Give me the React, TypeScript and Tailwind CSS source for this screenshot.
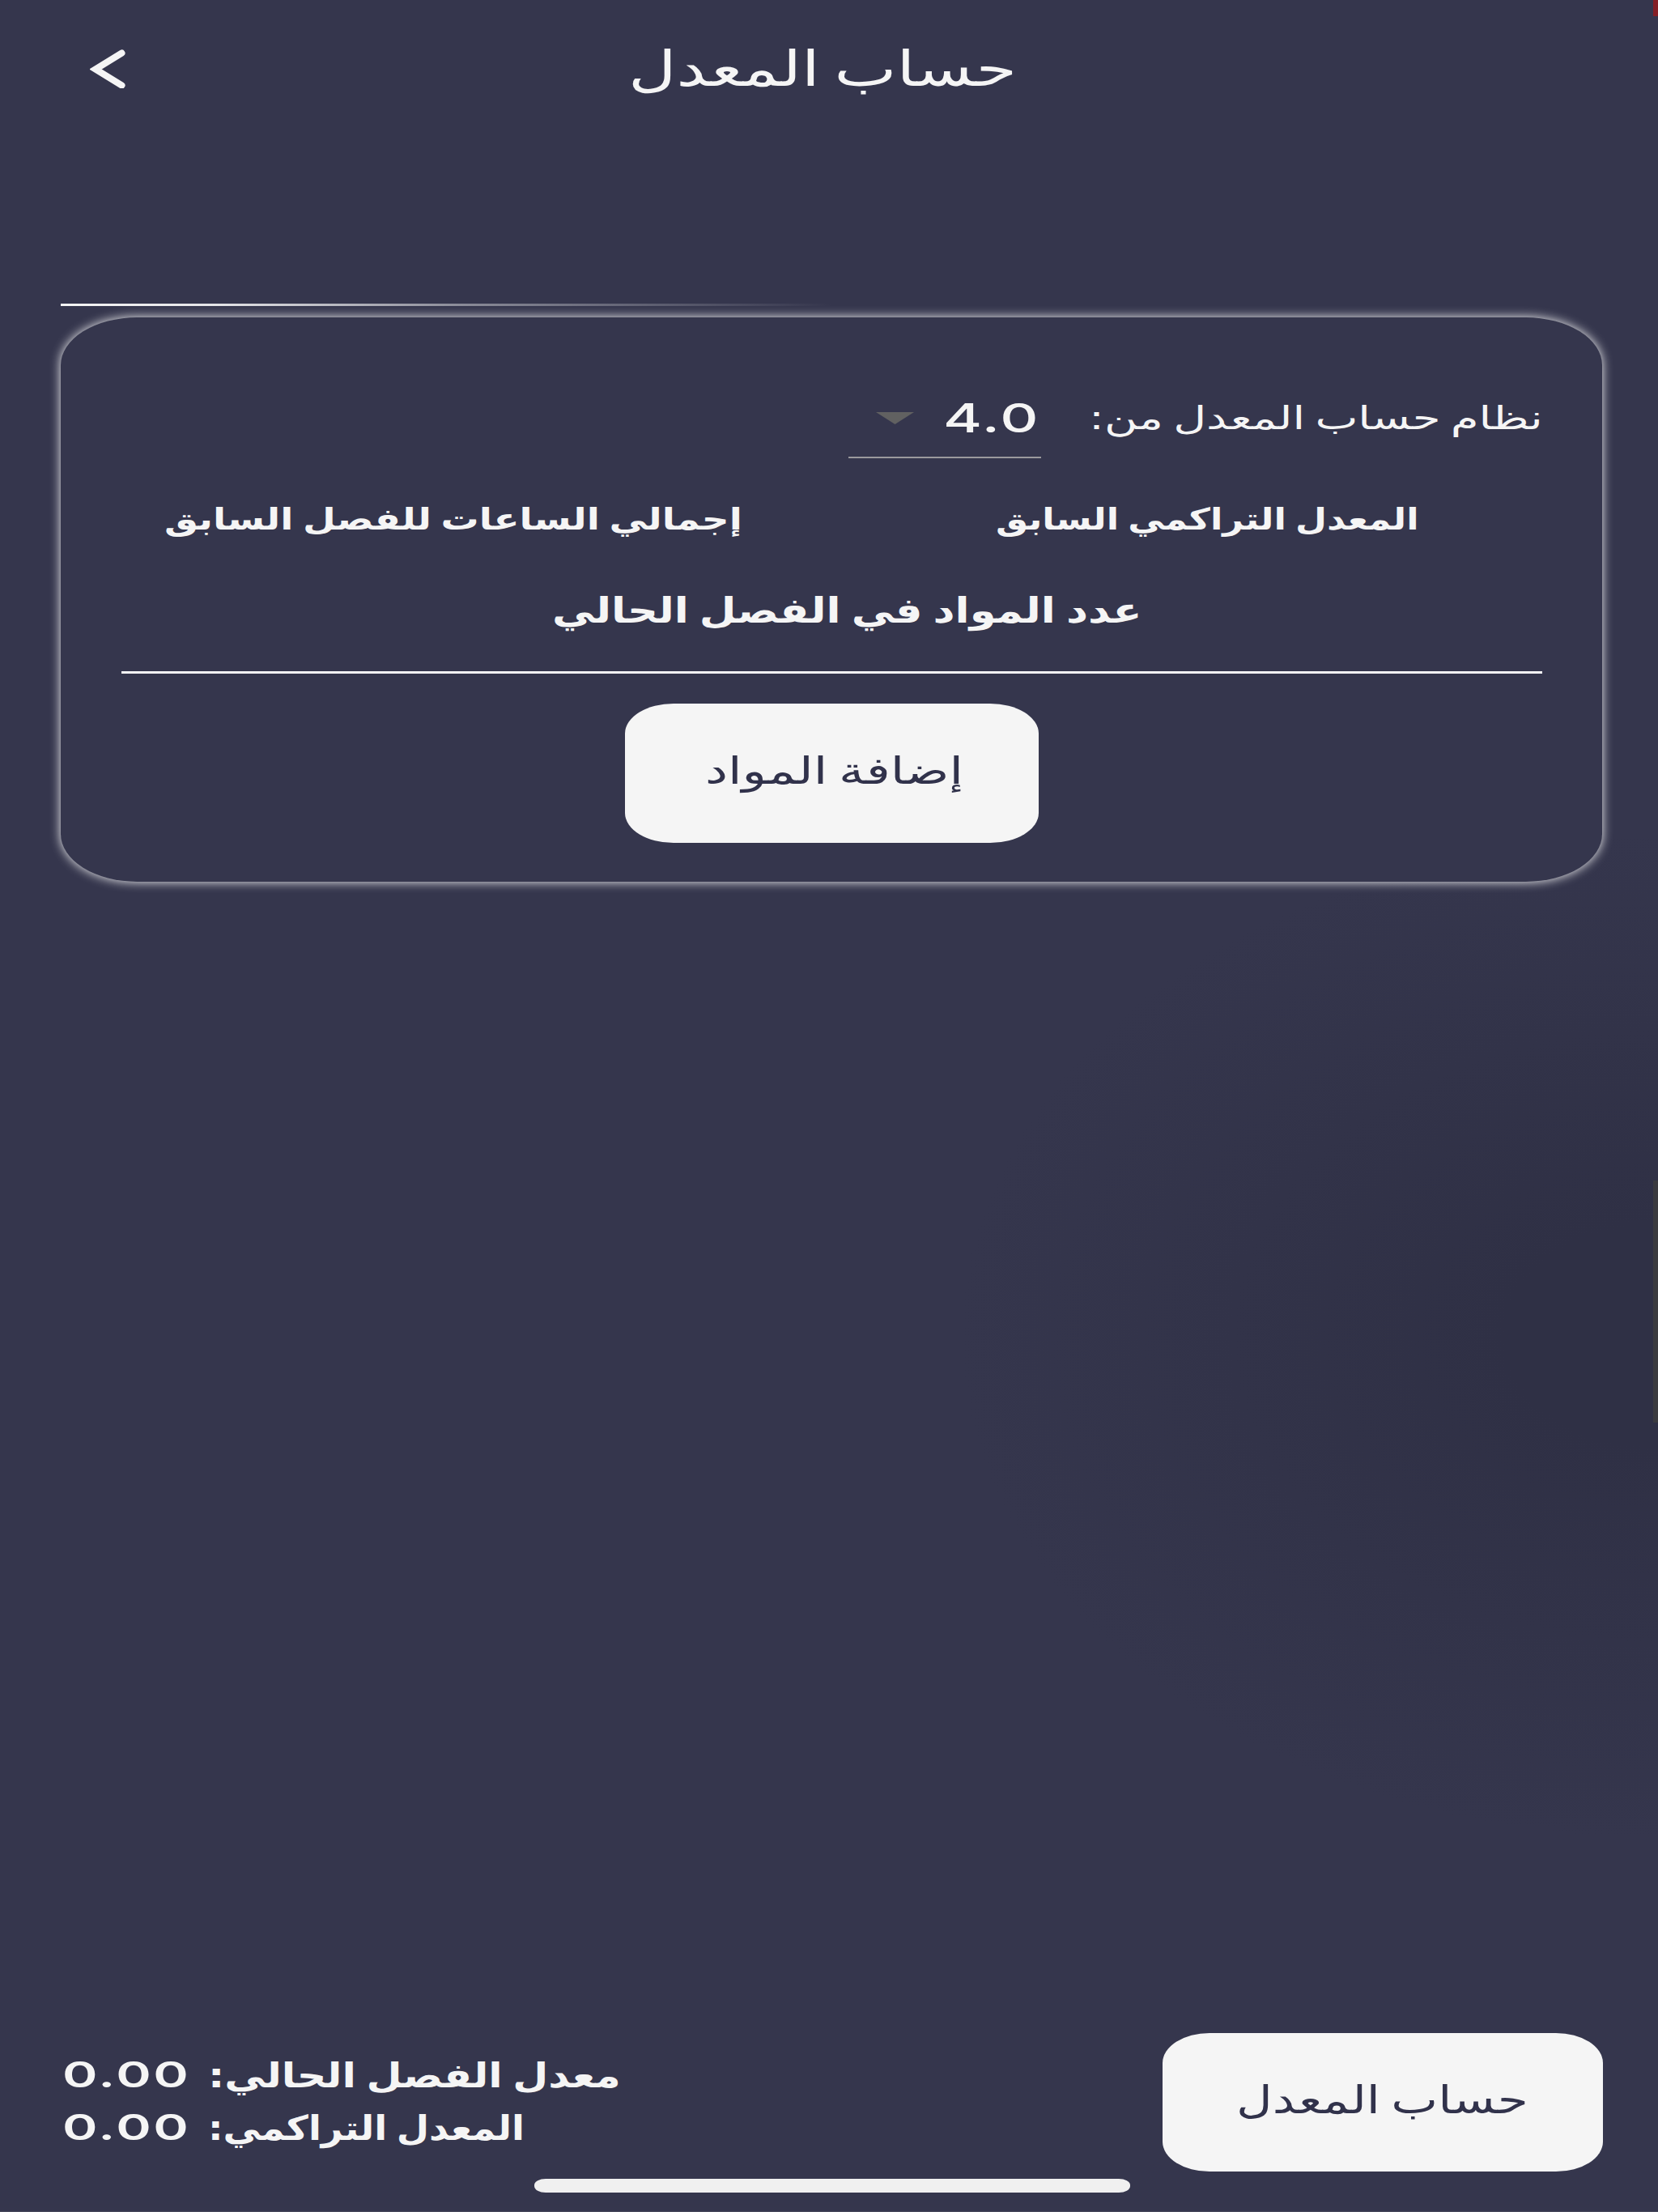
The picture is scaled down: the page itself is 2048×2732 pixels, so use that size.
import { useLayoutEffect, useRef, useState } from 'react'
import { clsx } from 'clsx'

interface FitTextProps {
  text: string
  width: number
  className?: string
}

// Single line of text stretched horizontally to fill the given width.
function FitText({ text, width, className }: FitTextProps) {
  const ref = useRef<HTMLSpanElement>(null)
  const [scale, setScale] = useState(1)

  useLayoutEffect(() => {
    if (ref.current) setScale(width / ref.current.offsetWidth)
  }, [text, width])

  return (
    <span dir="ltr" className="block shrink-0 text-left" style={{ width }}>
      <span
        ref={ref}
        dir="rtl"
        className={clsx('inline-block origin-left whitespace-nowrap leading-none [word-spacing:-0.1em]', className)}
        style={{ transform: `scaleX(${scale})` }}
      >
        {text}
      </span>
    </span>
  )
}

interface ResultProps {
  label: string
  labelWidth: number
  value: string
}

function Result({ label, labelWidth, value }: ResultProps) {
  return (
    <div className="flex h-[65px] items-center gap-[21px]">
      <FitText text={value} width={159} className="font-[Inter] text-[44px] font-semibold tracking-[0.04em]" />
      <FitText text={label} width={labelWidth} className="pt-[3px] text-[42px] font-bold" />
    </div>
  )
}

export default function App() {
  return (
    <div className="relative flex h-[2732px] w-[2048px] flex-col overflow-hidden border-b border-[#47485c] bg-[#35364d] bg-[radial-gradient(ellipse_860px_620px_at_2048px_1650px,#2f3045_0%,#2f3045_22%,#35364d_100%)] font-['DejaVu_Sans',sans-serif] text-[#f5f5f5]">
      <div className="absolute top-0 right-0 h-5 w-1.5 bg-[#841f26]" />
      <div className="absolute top-[1458px] right-0 h-[299px] w-1.5 bg-[#3a3a3f]" />

      <header className="flex h-[375px] items-start pl-[111px]">
        <svg className="mt-[61px] h-[48px] w-[44px]" viewBox="0 0 44 48" fill="none">
          <path d="M39.5 4.5 7 24.5 39.5 44.5" stroke="#f5f5f5" strokeWidth="8" strokeLinecap="round" />
        </svg>
        <h1 className="mt-[54px] ml-[621px]">
          <FitText text="حساب المعدل" width={480} className="text-[61px]" />
        </h1>
      </header>

      <div className="ml-[75px] h-[3px] w-[1905px] bg-[linear-gradient(to_right,#f5f5f5_0%,#e5e5e8_10%,#8a8b98_26%,transparent_50%)]" />

      <section className="relative mt-[14px] ml-[75px] flex h-[697px] w-[1905px] flex-col px-[75px]">
        <div className="absolute top-0 left-0 h-[697px] w-[1190px] origin-left scale-x-[1.6] rounded-[59px] bg-[#35364d] shadow-[0_0_10px_0_#f5f5f5]" />

        <div dir="rtl" className="relative mt-[82px] flex h-[92px] items-start">
          <div className="mt-[22px]">
            <FitText text="نظام حساب المعدل من:" width={560} className="text-[40px]" />
          </div>
          <div className="mr-[59px] flex h-[92px] w-[238px] items-start border-b-2 border-[#9a9a9d]">
            <div className="mt-[17px] mr-px">
              <FitText text="4.0" width={120} className="font-[Inter] text-[50px] font-medium tracking-[0.03em]" />
            </div>
            <svg className="mt-[35px] mr-[36px] h-[15px] w-[47px]" viewBox="0 0 47 15">
              <path d="M0 0h47L23.5 15z" fill="#616161" />
            </svg>
          </div>
        </div>

        <div className="relative mt-[57px] flex h-[50px] justify-between pr-[152px] pl-[53px]">
          <FitText text="إجمالي الساعات للفصل السابق" width={714} className="text-[37px] font-bold" />
          <FitText text="المعدل التراكمي السابق" width={523} className="text-[37px] font-bold" />
        </div>

        <div className="relative mt-[60px] flex h-[99px] items-start border-b-[3px] border-[#f5f5f5] pl-[532px]">
          <FitText text="عدد المواد في الفصل الحالي" width={728} className="text-[43px] font-bold" />
        </div>

        <button type="button" className="relative mt-[37px] flex h-[172px] w-[511px] items-start self-center rounded-[60px/37px] bg-[#f5f5f5] pt-[60px] pl-[99px] text-[#31324b]">
          <FitText text="إضافة المواد" width={319} className="text-[46px]" />
        </button>
      </section>

      <footer className="mt-auto mb-[49px] ml-[77px] flex h-[171px] w-[1903px] justify-between">
        <div className="pt-[19px]">
          <Result label="معدل الفصل الحالي:" labelWidth={510} value="0.00" />
          <Result label="المعدل التراكمي:" labelWidth={391} value="0.00" />
        </div>
        <button type="button" className="flex h-[171px] w-[544px] items-start rounded-[58px/37px] bg-[#f5f5f5] pt-[59px] pl-[91px] text-[#31324b]">
          <FitText text="حساب المعدل" width={361} className="text-[47px]" />
        </button>
      </footer>
      <div className="absolute bottom-[23px] left-[660px] h-[17px] w-[736px] rounded-[14px/8px] bg-[#f0f0f0]" />
    </div>
  )
}
